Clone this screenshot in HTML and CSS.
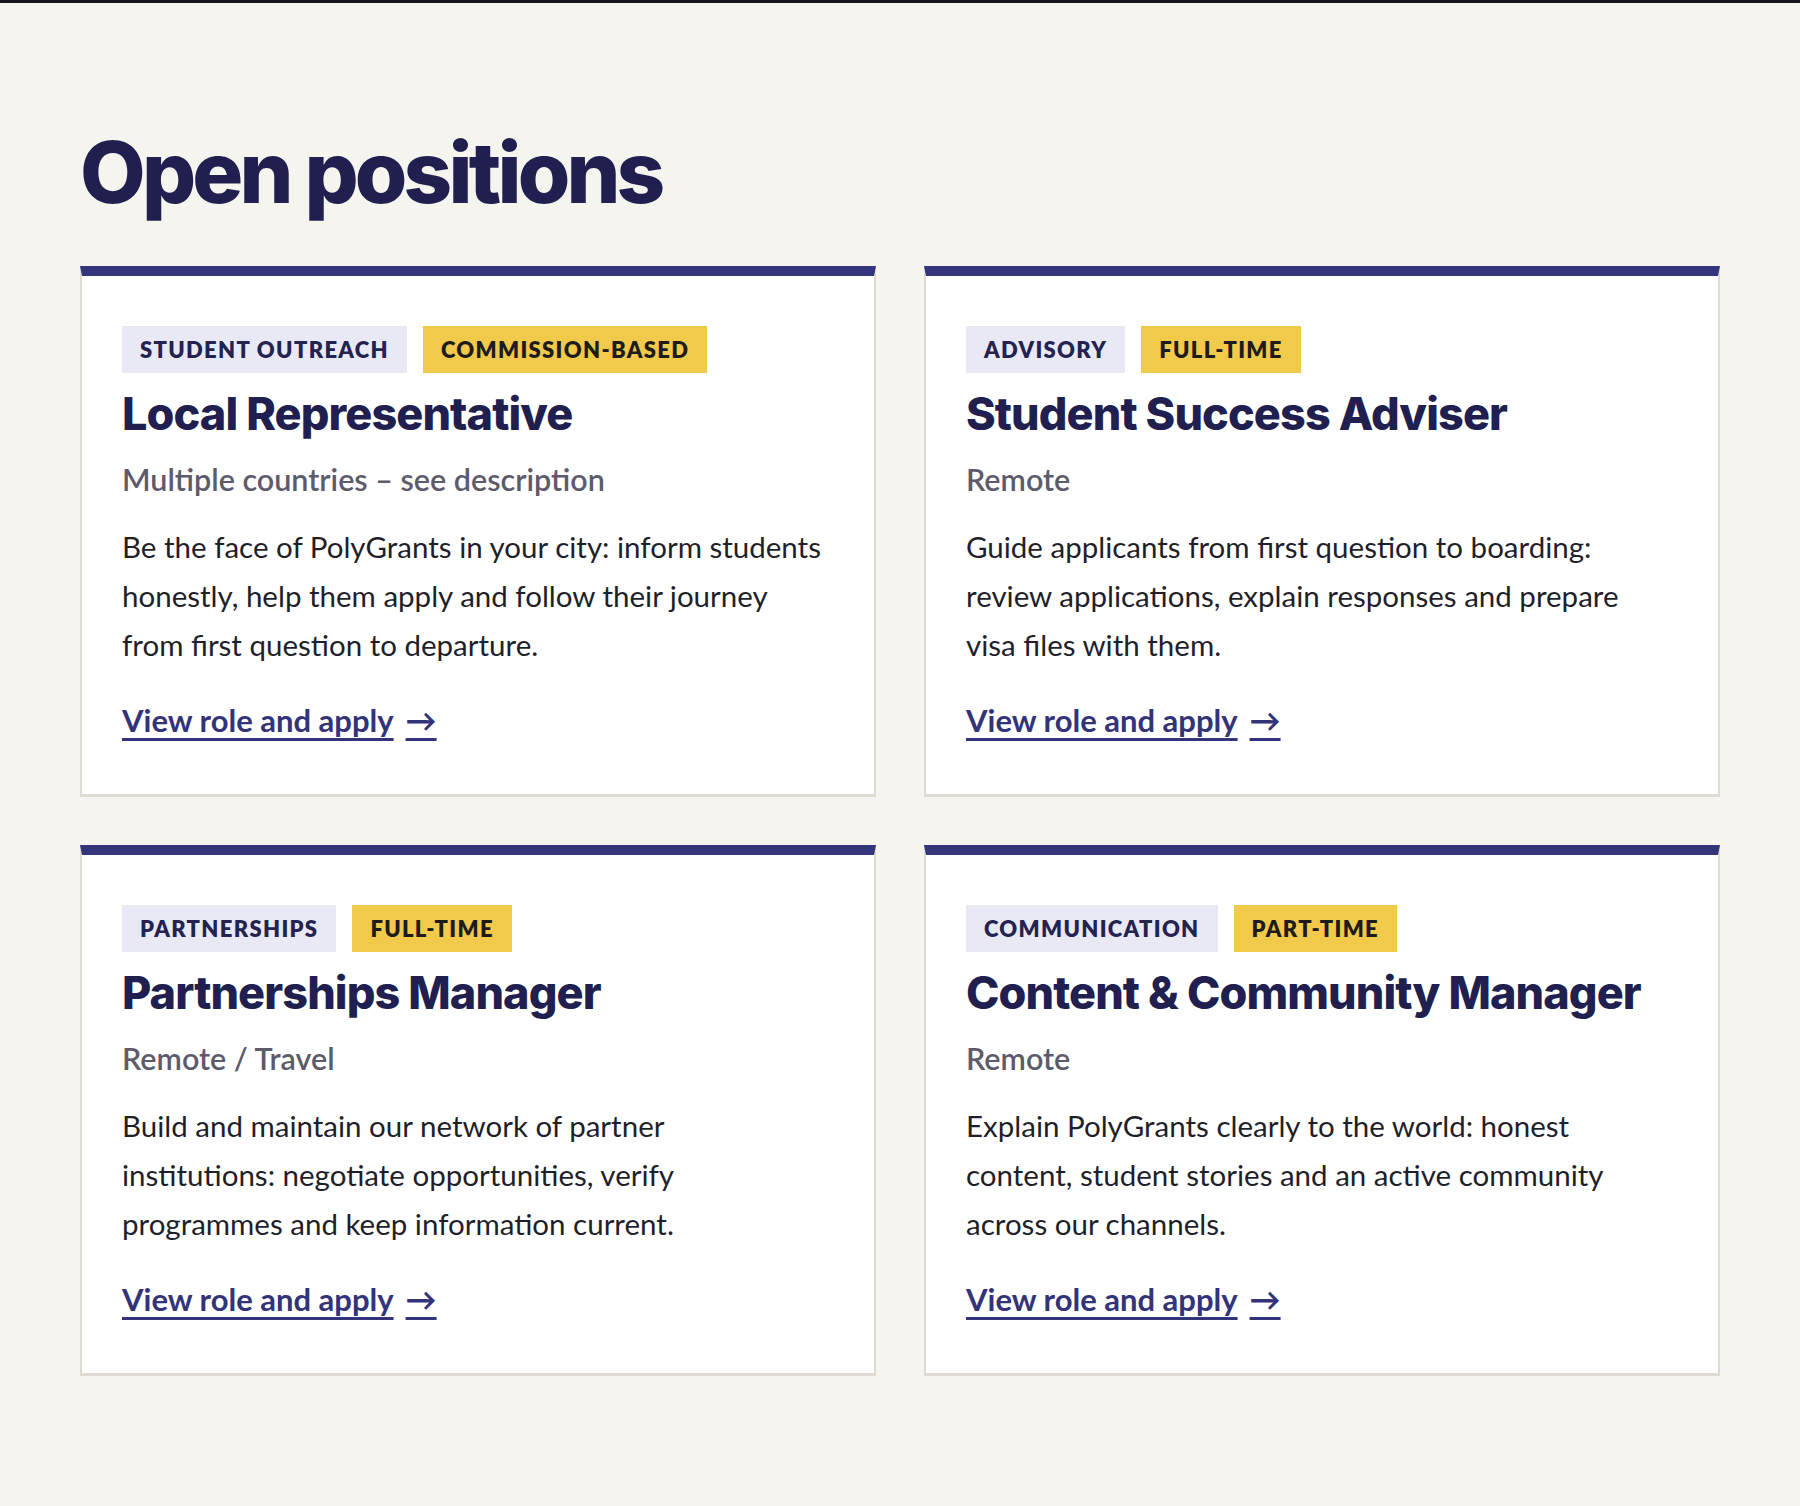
FILE: index.html
```html
<!DOCTYPE html>
<html lang="en">
<head>
  <meta charset="UTF-8">
  <meta name="viewport" content="width=device-width, initial-scale=1.0">
  <title>PolyGrants - Open positions</title>
  <link rel="stylesheet" href="styles.css">
</head>
<body>
  <main class="careers">
    <h1 class="careers-title">Open positions</h1>

    <div class="job-grid">
      <article class="job-card">
        <div class="job-tags">
          <span class="tag tag-team">Student outreach</span>
          <span class="tag tag-type">Commission-based</span>
        </div>
        <h2 class="job-title">Local Representative</h2>
        <p class="job-location">Multiple countries – see description</p>
        <p class="job-summary">Be the face of PolyGrants in your city: inform students<br>honestly, help them apply and follow their journey<br>from first question to departure.</p>
        <a class="job-link" href="#"><span class="link-text">View role and apply</span><span class="arrow">→</span></a>
      </article>

      <article class="job-card">
        <div class="job-tags">
          <span class="tag tag-team">Advisory</span>
          <span class="tag tag-type">Full-time</span>
        </div>
        <h2 class="job-title">Student Success Adviser</h2>
        <p class="job-location">Remote</p>
        <p class="job-summary">Guide applicants from first question to boarding:<br>review applications, explain responses and prepare<br>visa files with them.</p>
        <a class="job-link" href="#"><span class="link-text">View role and apply</span><span class="arrow">→</span></a>
      </article>

      <article class="job-card">
        <div class="job-tags">
          <span class="tag tag-team">Partnerships</span>
          <span class="tag tag-type">Full-time</span>
        </div>
        <h2 class="job-title">Partnerships Manager</h2>
        <p class="job-location">Remote / Travel</p>
        <p class="job-summary">Build and maintain our network of partner<br>institutions: negotiate opportunities, verify<br>programmes and keep information current.</p>
        <a class="job-link" href="#"><span class="link-text">View role and apply</span><span class="arrow">→</span></a>
      </article>

      <article class="job-card">
        <div class="job-tags">
          <span class="tag tag-team">Communication</span>
          <span class="tag tag-type">Part-time</span>
        </div>
        <h2 class="job-title">Content &amp; Community Manager</h2>
        <p class="job-location">Remote</p>
        <p class="job-summary">Explain PolyGrants clearly to the world: honest<br>content, student stories and an active community<br>across our channels.</p>
        <a class="job-link" href="#"><span class="link-text">View role and apply</span><span class="arrow">→</span></a>
      </article>
    </div>
  </main>
</body>
</html>
```
FILE: styles.css
```css
* {
  margin: 0;
  padding: 0;
  box-sizing: border-box;
}
body {
  background: #f5f4ee;
  border-top: 3px solid #17151f;
  font-family: Lato, "Noto Sans", sans-serif;
  color: #1f1f2a;
  min-height: 100vh;
}
.careers {
  padding: 123px 80px 120px;
}
.careers-title {
  font-family: Inter, sans-serif;
  font-weight: 800;
  font-size: 85px;
  line-height: 1.1;
  letter-spacing: -0.045em;
  color: #201f4f;
  margin-bottom: 46px;
}
.job-grid {
  display: grid;
  grid-template-columns: 1fr 1fr;
  gap: 48px;
}
.job-card {
  background: white;
  border: 2px solid #dddbd3;
  border-top: 10px solid #34357a;
  border-bottom-width: 3px;
  padding: 50px 40px 55px;
}
.job-tags {
  display: flex;
  gap: 16px;
}
.tag {
  font-weight: 800;
  font-size: 22px;
  line-height: 23px;
  letter-spacing: 0.06em;
  text-transform: uppercase;
  padding: 12px 18px;
}
.tag-team {
  background: #e9e9f5;
  color: #24234f;
}
.tag-type {
  background: #f1c94b;
  color: #1e1c1a;
}
.job-title {
  font-family: Inter, sans-serif;
  font-weight: 800;
  font-size: 45px;
  line-height: 53px;
  letter-spacing: -0.02em;
  color: #201f4f;
  margin-top: 14px;
}
.job-location {
  font-weight: 600;
  font-size: 30.5px;
  line-height: 38px;
  color: #5c5b6b;
  margin-top: 20px;
}
.job-summary {
  font-size: 29.5px;
  line-height: 49px;
  margin-top: 24px;
}
.job-link {
  display: inline-block;
  margin-top: 32px;
  font-weight: 700;
  font-size: 31px;
  line-height: 38px;
  color: #33337a;
  text-decoration: none;
}
.job-link span {
  text-decoration: underline;
  text-decoration-thickness: 3px;
  text-underline-offset: 6px;
}
.job-link .arrow {
  margin-left: 12px;
}
```
